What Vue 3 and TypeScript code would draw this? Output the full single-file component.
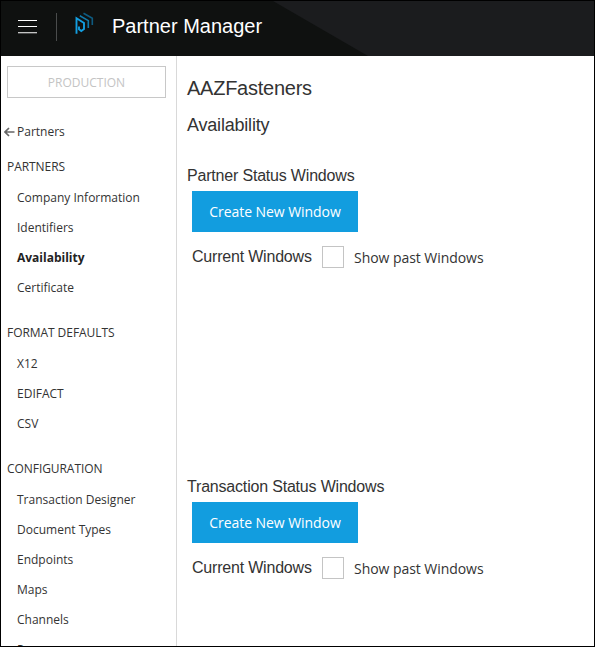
<script setup lang="ts">
interface NavGroup {
  title: string
  items: string[]
}

const groups: NavGroup[] = [
  { title: 'PARTNERS', items: ['Company Information', 'Identifiers', 'Availability', 'Certificate'] },
  { title: 'FORMAT DEFAULTS', items: ['X12', 'EDIFACT', 'CSV'] },
  { title: 'CONFIGURATION', items: ['Transaction Designer', 'Document Types', 'Endpoints', 'Maps', 'Channels', 'Processes'] },
]
const active = 'Availability'
const sections: string[] = ['Partner Status Windows', 'Transaction Status Windows']
</script>

<template>
  <div class="app">
    <header class="topbar">
      <svg class="menu" width="20" height="16" viewBox="0 0 20 16">
        <path d="M0 1.5H19M0 7.5H19M0 13.7H19" stroke="#fff" stroke-width="1.1" />
      </svg>
      <span class="divider"></span>
      <svg class="logo" width="20" height="24" viewBox="0 0 20 24" fill="none">
        <path d="M1.5 21.8V6.3L9 11V17L6.3 19L4 17.2V14.5" stroke="#139ee0" stroke-width="1.9" />
        <path d="M4.8 3.8L13.3 8.6V16" stroke="#107aac" stroke-width="1.6" />
        <path d="M8.5 1.2L17.3 6.2V13" stroke="#0e5b80" stroke-width="1.6" />
      </svg>
      <h1 class="title">Partner Manager</h1>
    </header>
    <div class="body">
      <nav class="sidebar">
        <div class="env">PRODUCTION</div>
        <a class="back">
          <svg width="11" height="10" viewBox="0 0 11 10" fill="none">
            <path d="M5 1L1 5L5 9M1 5H10.5" stroke="#666" stroke-width="1.7" />
          </svg>
          <span>Partners</span>
        </a>
        <section v-for="g in groups" :key="g.title" class="group">
          <h2 class="group-title">{{ g.title }}</h2>
          <a v-for="i in g.items" :key="i" class="item" :class="{ active: i === active }">{{ i }}</a>
        </section>
      </nav>
      <main class="main">
        <h2 class="partner">AAZFasteners</h2>
        <h3 class="page">Availability</h3>
        <section v-for="s in sections" :key="s" class="windows">
          <h4 class="heading">{{ s }}</h4>
          <button class="create" type="button">Create New Window</button>
          <div class="row">
            <span class="current">Current Windows</span>
            <span class="check"></span>
            <span class="past">Show past Windows</span>
          </div>
        </section>
      </main>
    </div>
  </div>
</template>

<style>
body { overflow: hidden; }
</style>

<style scoped>
.app {
  box-sizing: border-box;
  width: 595px;
  height: 647px;
  border: 1px solid #000;
  overflow: hidden;
  background: #fff;
  color: #333;
  display: flex;
  flex-direction: column;
  font-family: "Open Sans", sans-serif;
}
h1, h2, h3, h4 { margin: 0; font-weight: 400; }
.topbar {
  flex: none;
  height: 55px;
  display: flex;
  align-items: flex-start;
  background: #1b1c1e;
  position: relative;
}
.topbar::before {
  content: "";
  position: absolute;
  inset: 0;
  background: #0f1110;
  clip-path: polygon(0 0, 272px 0, 367px 55px, 0 55px);
}
.topbar > * { position: relative; flex: none; }
.menu { margin: 18px 0 0 17px; }
.divider { width: 1px; height: 28px; margin: 12px 0 0 18px; background: #4a4c4c; }
.logo { margin: 11px 0 0 18px; }
.title {
  margin-left: 17px;
  font: 20px/50px "Liberation Sans", Arial, sans-serif;
  color: #fff;
  white-space: nowrap;
}
.body { flex: 1; min-height: 0; display: flex; }
.sidebar {
  box-sizing: border-box;
  width: 176px;
  flex: none;
  border-right: 1px solid #d9d9d9;
  padding: 10px 10px 0 6px;
  font-size: 12px;
  line-height: 30px;
  overflow: hidden;
}
.env {
  box-sizing: border-box;
  height: 32px;
  width: 159px;
  border: 1px solid #c8c8c8;
  color: #c4c4c4;
  text-align: center;
  line-height: 31px;
}
.back { display: flex; align-items: center; height: 30px; margin: 19px 0 5px -3px; }
.back svg { margin-right: 2px; }
.group { padding-bottom: 15px; }
.group-title { font-size: 12px; line-height: 30px; margin-bottom: 1px; letter-spacing: -0.06px; }
.item { display: block; padding-left: 10px; height: 30px; white-space: nowrap; }
.item.active { font-weight: 700; color: #222; }
.main { flex: 1; padding: 16px 0 0 10px; }
.partner { font: 20px/32px "Liberation Sans", Arial, sans-serif; letter-spacing: -0.25px; }
.page { font: 18px/26px "Liberation Sans", Arial, sans-serif; margin-top: 8px; letter-spacing: -0.2px; }
.windows { height: 311px; }
.page + .windows { margin-top: 26px; }
.heading { font: 16px/24px "Liberation Sans", Arial, sans-serif; padding-bottom: 1px; letter-spacing: -0.19px; }
.create {
  display: block;
  margin: 2px 0 0 5px;
  width: 166px;
  height: 41px;
  padding: 0;
  border: 0;
  background: #129ddf;
  color: #fff;
  font: 500 14px/41px "Open Sans", sans-serif;
  letter-spacing: -0.06px;
}
.row { display: flex; align-items: center; margin: 14px 0 0 5px; height: 22px; }
.current { font: 16px/22px "Liberation Sans", Arial, sans-serif; width: 130px; letter-spacing: -0.2px; }
.check { box-sizing: border-box; width: 22px; height: 22px; border: 1px solid #c4c4c4; }
.past { font-size: 14px; line-height: 22px; margin-left: 10px; padding-top: 2px; letter-spacing: -0.05px; }
</style>
